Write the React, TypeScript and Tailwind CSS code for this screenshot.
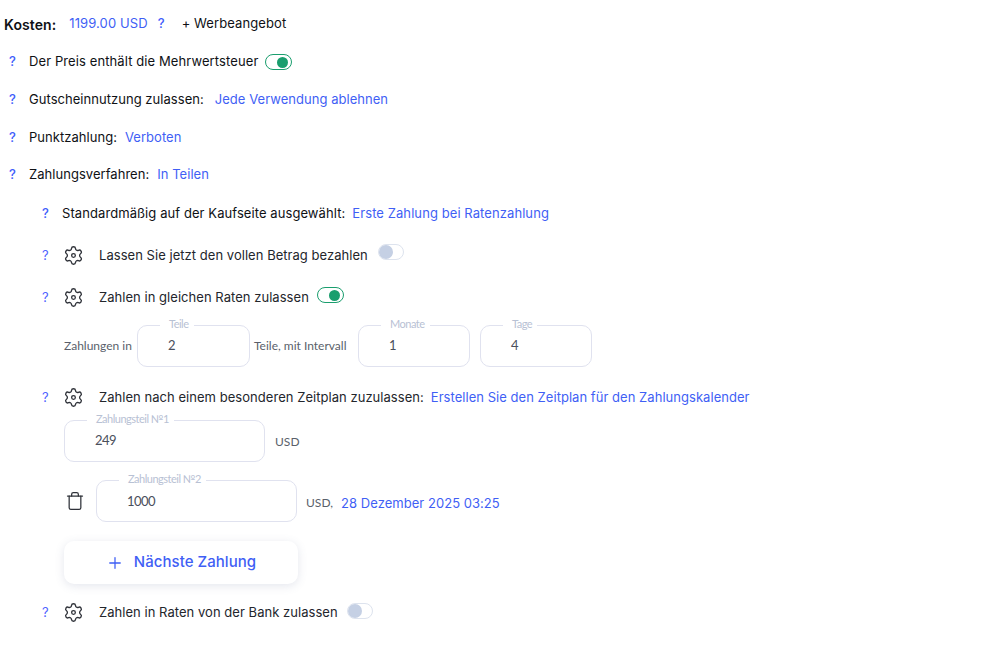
import React from 'react';
import { Trash, Plus } from 'lucide-react';

const Help = ({ light }: { light?: boolean }) => (
  <span className={`text-[13px] w-[10px] shrink-0 ${light ? 'font-normal text-[#4f63ff]' : 'font-medium text-[#3f5efb]'}`}>?</span>
);

const Link = ({ children }: { children: React.ReactNode }) => (
  <span className="text-[#3f5ff5]">{children}</span>
);

const Toggle = ({ on, className = '' }: { on?: boolean; className?: string }) =>
  on ? (
    <span className={`flex w-[27px] h-[16px] items-center justify-end rounded-full border border-[#1a9e6e] pr-[3px] ${className}`}>
      <span className="w-[11px] h-[11px] rounded-full bg-[#1a9e6e]" />
    </span>
  ) : (
    <span className={`flex w-[26px] h-[16px] items-center rounded-full border border-[#dde3ee] ${className}`}>
      <span className="w-[14px] h-[14px] rounded-full bg-[#c5d0e4]" />
    </span>
  );

const Gear = () => (
  <svg viewBox="0 0 24 24" fill="none" stroke="currentColor" strokeWidth={1.5} strokeLinecap="round" strokeLinejoin="round" className="ml-[11px] w-[21px] h-[21px] shrink-0 -translate-y-[1px] text-[#2f3239]">
    <path d="M9.671 4.136a2.34 2.34 0 0 1 4.659 0 2.34 2.34 0 0 0 3.319 1.915 2.34 2.34 0 0 1 2.33 4.033 2.34 2.34 0 0 0 0 3.831 2.34 2.34 0 0 1-2.33 4.033 2.34 2.34 0 0 0-3.319 1.915 2.34 2.34 0 0 1-4.659 0 2.34 2.34 0 0 0-3.32-1.915 2.34 2.34 0 0 1-2.33-4.033 2.34 2.34 0 0 0 0-3.831A2.34 2.34 0 0 1 6.35 6.051a2.34 2.34 0 0 0 3.32-1.915" />
    <circle cx="12" cy="12" r="2.1" />
  </svg>
);

const Field = ({ label, value, width, valueClass = 'pb-[1px]' }: { label: string; value: string; width: string; valueClass?: string }) => (
  <div className={`relative h-[42px] ${width} shrink-0 rounded-[10px] border border-[#e0e2ef] flex items-center pl-[30px] ${valueClass} font-['Lato',sans-serif] text-[13px] tracking-[-0.5px] text-[#4a4f5c]`}>
    <span className="absolute -top-[9px] left-[22px] bg-white pl-[9px] pr-[5px] text-[11px] tracking-[-0.5px] leading-[14px] text-[#b8c1d4]">{label}</span>
    {value}
  </div>
);

const SubRow = ({ children, className = '' }: { children: React.ReactNode; className?: string }) => (
  <div className={`flex items-center ${className}`}>
    <Help light />
    <Gear />
    <div className="ml-[15px] flex items-center text-[#23262c]">{children}</div>
  </div>
);

export default function App() {
  return (
    <div className="w-[993px] h-[654px] bg-white overflow-hidden font-['Inter',sans-serif] text-[13px] tracking-[0.04px] text-[#0f1115] pt-[15px]">
      <div className="h-[18px] flex items-center pl-[4px] tracking-[0.1px]">
        <span className="font-semibold text-[14px]">Kosten:</span>
        <span className="ml-[13px]"><Link>1199.00 USD</Link></span>
        <span className="ml-[10px] text-[#3f5efb] font-medium">?</span>
        <span className="ml-[17px]">+ Werbeangebot</span>
      </div>

      <div className="pl-[9px]">
        <div className="mt-[20px] h-[18px] flex items-center tracking-[0.1px]">
          <Help />
          <span className="ml-[10px]">Der Preis enthält die Mehrwertsteuer</span>
          <Toggle on className="ml-[7px]" />
        </div>
        <div className="mt-[20px] h-[18px] flex items-center">
          <Help />
          <span className="ml-[10px]">Gutscheinnutzung zulassen:</span>
          <span className="ml-[11px]"><Link>Jede Verwendung ablehnen</Link></span>
        </div>
        <div className="mt-[20px] h-[18px] flex items-center">
          <Help />
          <span className="ml-[10px]">Punktzahlung:</span>
          <span className="ml-[8px]"><Link>Verboten</Link></span>
        </div>
        <div className="mt-[19px] h-[18px] flex items-center">
          <Help />
          <span className="ml-[10px]">Zahlungsverfahren:</span>
          <span className="ml-[8px]"><Link>In Teilen</Link></span>
        </div>

        <div className="pl-[33px]">
          <div className="mt-[21px] h-[18px] flex items-center tracking-[0.08px]">
            <Help />
            <span className="ml-[10px]">Standardmäßig auf der Kaufseite ausgewählt:</span>
            <span className="ml-[7px]"><Link>Erste Zahlung bei Ratenzahlung</Link></span>
          </div>

          <SubRow className="mt-[23px] h-[20px]">
            <span>Lassen Sie jetzt den vollen Betrag bezahlen</span>
            <Toggle className="ml-[10px] -translate-y-[4px]" />
          </SubRow>

          <SubRow className="mt-[22px] h-[20px]">
            <span>Zahlen in gleichen Raten zulassen</span>
            <Toggle on className="ml-[8px] -translate-y-[3px]" />
          </SubRow>

          <div className="mt-[17px] pl-[22px] flex items-center font-['Lato',sans-serif] text-[12px] tracking-normal text-[#5a5f6b]">
            <span className="w-[73px] shrink-0">Zahlungen in</span>
            <Field label="Teile" value="2" width="w-[113px]" />
            <span className="ml-[4px] w-[104px] shrink-0 pb-[1px]">Teile, mit Intervall</span>
            <Field label="Monate" value="1" width="w-[112px]" />
            <span className="w-[10px]" />
            <Field label="Tage" value="4" width="w-[112px]" />
          </div>

          <SubRow className="mt-[21px] h-[20px]">
            <span>Zahlen nach einem besonderen Zeitplan zuzulassen:</span>
            <span className="ml-[7px]"><Link>Erstellen Sie den Zeitplan für den Zahlungskalender</Link></span>
          </SubRow>

          <div className="mt-[12px] pl-[22px] flex items-center">
            <Field label="Zahlungsteil №1" value="249" width="w-[201px]" />
            <span className="ml-[10px] pt-[2px] font-['Lato',sans-serif] text-[12px] text-[#5a5f6b]">USD</span>
          </div>

          <div className="mt-[18px] pl-[23px] flex items-center">
            <Trash className="w-[20px] h-[20px] text-[#2f3239]" strokeWidth={1.5} />
            <span className="w-[11px]" />
            <Field label="Zahlungsteil №2" value="1000" width="w-[201px]" valueClass="pt-[1px]" />
            <span className="ml-[9px] pt-[4px] font-['Lato',sans-serif] text-[12px] text-[#5a5f6b]">USD,</span>
            <span className="ml-[8px] pt-[5px]"><Link>28 Dezember 2025 03:25</Link></span>
          </div>

          <button className="mt-[19px] ml-[22px] w-[234px] h-[43px] rounded-[10px] bg-white shadow-[0_2px_10px_rgba(90,100,140,0.16)] flex items-center justify-center text-[#3f5ff5] text-[15px] font-medium">
            <Plus className="w-[18px] h-[18px] mr-[10px]" strokeWidth={1.7} />
            Nächste Zahlung
          </button>

          <SubRow className="mt-[19px] h-[20px]">
            <span>Zahlen in Raten von der Bank zulassen</span>
            <Toggle className="ml-[9px] -translate-y-[2px]" />
          </SubRow>
        </div>
      </div>
    </div>
  );
}
